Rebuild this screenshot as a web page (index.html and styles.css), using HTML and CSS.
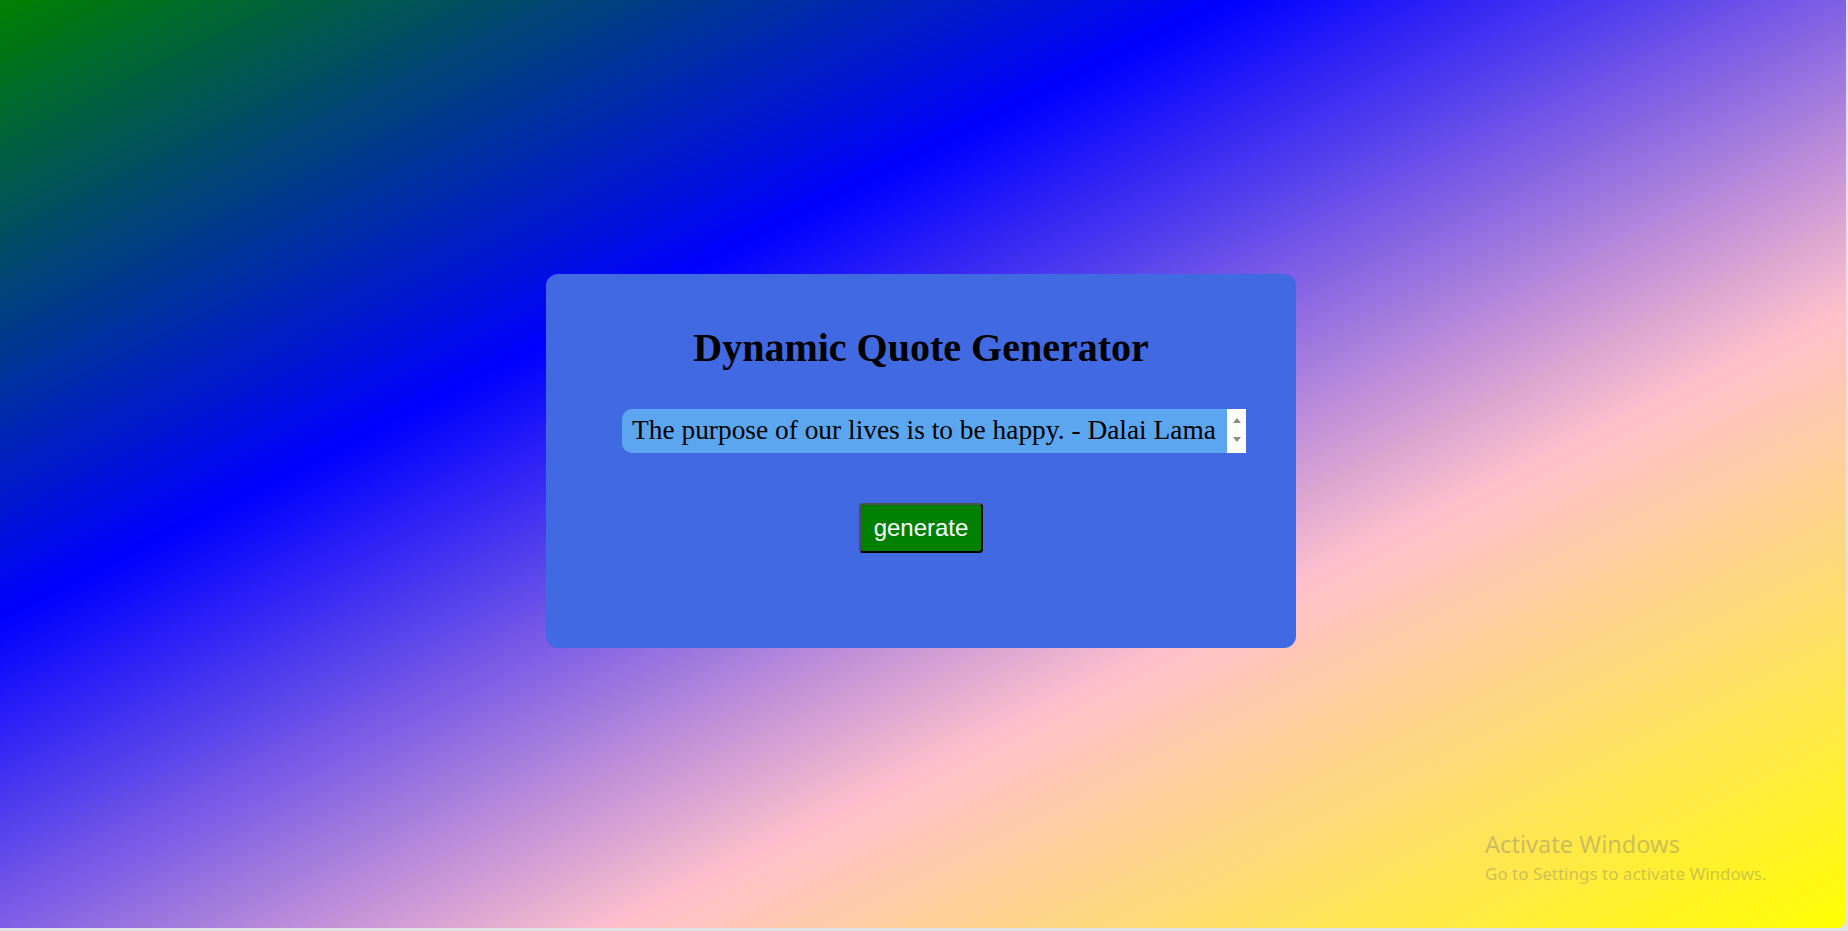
FILE: index.html
```html
<!DOCTYPE html>
<html lang="en">
<head>
<meta charset="utf-8">
<title>Dynamic Quote Generator</title>
<link rel="stylesheet" href="styles.css">
</head>
<body>
<div class="screen">
  <main class="card">
    <h1 class="title">Dynamic Quote Generator</h1>
    <div class="quote">
      <div class="quote-text">The purpose of our lives is to be happy. - Dalai Lama</div>
      <div class="scrollbar">
        <span class="arrow arrow-up"></span>
        <span class="arrow arrow-down"></span>
      </div>
    </div>
    <div class="actions">
      <button class="generate" type="button">generate</button>
    </div>
  </main>
  <div class="watermark">
    <div class="wm-title">Activate Windows</div>
    <div class="wm-sub">Go to Settings to activate Windows.</div>
  </div>
</div>
</body>
</html>
```
FILE: styles.css
```css
html, body {
  margin: 0;
  padding: 0;
}
body {
  background: #e2e2e6;
  width: 1848px;
  height: 931px;
  overflow: hidden;
}
.screen {
  position: relative;
  width: 1846px;
  height: 928px;
  background: linear-gradient(to bottom right, #008000, #0000ff, #ffc0cb, #ffff00);
  border-bottom-right-radius: 8px;
  display: flex;
  align-items: center;
  justify-content: center;
  padding: 0 4px 6px 0;
  box-sizing: border-box;
}
.card {
  width: 750px;
  height: 374px;
  box-sizing: border-box;
  background: #4169e1;
  border-radius: 12px;
  padding-top: 51px;
}
.title {
  margin: 0;
  font-family: "Liberation Serif", "Times New Roman", serif;
  font-weight: bold;
  font-size: 40px;
  line-height: 46px;
  text-align: center;
  color: #000;
}
.quote {
  display: flex;
  margin: 38px 0 0 76px;
  width: 624px;
  height: 44px;
}
.quote-text {
  flex: 1;
  background: #5ca6ef;
  border-radius: 10px 0 0 10px;
  padding: 6px 0 0 10px;
  font-family: "Liberation Serif", "Times New Roman", serif;
  font-size: 27.4px;
  line-height: 31px;
  color: #000;
  white-space: nowrap;
  overflow: hidden;
}
.scrollbar {
  width: 19px;
  background: #fff;
  display: flex;
  flex-direction: column;
  justify-content: space-between;
  align-items: center;
  padding: 9px 0 11px;
  box-sizing: border-box;
}
.arrow {
  width: 0;
  height: 0;
  border-left: 4px solid transparent;
  border-right: 4px solid transparent;
}
.arrow-up {
  border-bottom: 5px solid #8a8a8a;
}
.arrow-down {
  border-top: 5px solid #8a8a8a;
}
.actions {
  margin-top: 50px;
  text-align: center;
}
.generate {
  font-family: "Liberation Sans", Arial, sans-serif;
  font-size: 24px;
  line-height: 28px;
  color: #fff;
  background: #008000;
  border: 2px solid;
  border-color: #4f4f4f #000 #000 #4f4f4f;
  border-radius: 4px;
  padding: 9px 13px;
  margin: 0;
  cursor: pointer;
}
.watermark {
  position: absolute;
  left: 1485px;
  top: 829px;
  color: rgba(120, 120, 120, 0.4);
  font-family: "Noto Sans", "Open Sans", sans-serif;
}
.wm-title {
  font-size: 23.6px;
  line-height: 31px;
}
.wm-sub {
  margin-top: 3px;
  font-size: 17px;
  line-height: 22px;
}
```
